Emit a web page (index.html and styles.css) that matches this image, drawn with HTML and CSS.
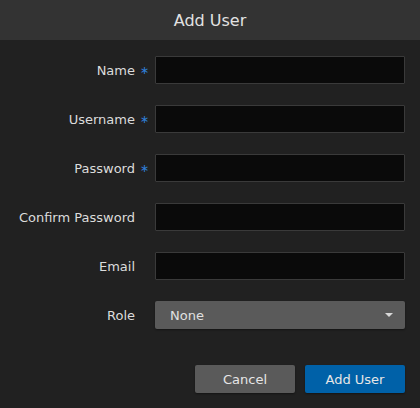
FILE: index.html
```html
<!DOCTYPE html>
<html>
<head>
<meta charset="utf-8">
<link rel="stylesheet" href="styles.css">
</head>
<body>
<div class="dialog">
  <div class="header">Add User</div>
  <form class="form">
    <label class="label">Name<span class="req">∗</span></label>
    <input class="field" type="text">
    <label class="label">Username<span class="req">∗</span></label>
    <input class="field" type="text">
    <label class="label">Password<span class="req">∗</span></label>
    <input class="field" type="password">
    <label class="label">Confirm Password<span class="req"></span></label>
    <input class="field" type="password">
    <label class="label">Email<span class="req"></span></label>
    <input class="field" type="text">
    <label class="label">Role<span class="req"></span></label>
    <div class="select"><span>None</span><span class="caret"></span></div>
  </form>
  <div class="actions">
    <button class="btn btn-cancel" type="button">Cancel</button>
    <button class="btn btn-primary" type="button">Add User</button>
  </div>
</div>
</body>
</html>
```
FILE: styles.css
```css
html, body {
  margin: 0;
  padding: 0;
  background: #212121;
  font-family: "DejaVu Sans", sans-serif;
  color: #dcdcdc;
}
.dialog {
  width: 420px;
  height: 408px;
  background: #212121;
  display: flex;
  flex-direction: column;
}
.header {
  height: 40px;
  background: #333333;
  display: flex;
  align-items: center;
  justify-content: center;
  font-size: 16px;
  color: #e2e2e2;
}
.form {
  margin: 16px 0 0 0;
  display: grid;
  grid-template-columns: 147px 250px;
  column-gap: 8px;
  row-gap: 21px;
  align-items: center;
}
.label {
  display: flex;
  justify-content: flex-end;
  align-items: center;
  font-size: 13px;
  color: #dcdcdc;
}
.req {
  flex: 0 0 12px;
  width: 12px;
  box-sizing: border-box;
  padding-left: 5px;
  white-space: nowrap;
  overflow: visible;
  text-align: left;
  color: #2f7ed8;
  font-size: 11px;
}
.field {
  box-sizing: border-box;
  height: 28px;
  width: 250px;
  margin: 0;
  background: #0a0a0a;
  border: 1px solid #3a3a3a;
  border-radius: 1px;
  outline: none;
}
.select {
  box-sizing: border-box;
  height: 28px;
  width: 250px;
  background: #5a5a5a;
  border-radius: 2px;
  display: flex;
  align-items: center;
  justify-content: space-between;
  padding: 0 12px 0 15px;
  font-size: 13px;
  color: #e0e0e0;
  box-shadow: 0 1px 2px rgba(0,0,0,0.4);
}
.caret {
  width: 0;
  height: 0;
  border-left: 4px solid transparent;
  border-right: 4px solid transparent;
  border-top: 4px solid #d8d8d8;
}
.actions {
  margin-top: 36px;
  padding-right: 15px;
  display: flex;
  justify-content: flex-end;
  gap: 10px;
}
.btn {
  width: 100px;
  height: 28px;
  border: none;
  border-radius: 2px;
  font-family: "DejaVu Sans", sans-serif;
  font-size: 13px;
  color: #e6e6e6;
  padding: 0;
  box-shadow: 0 1px 2px rgba(0,0,0,0.4);
}
.btn-cancel {
  background: #5a5a5a;
}
.btn-primary {
  background: #0061a8;
}
```
